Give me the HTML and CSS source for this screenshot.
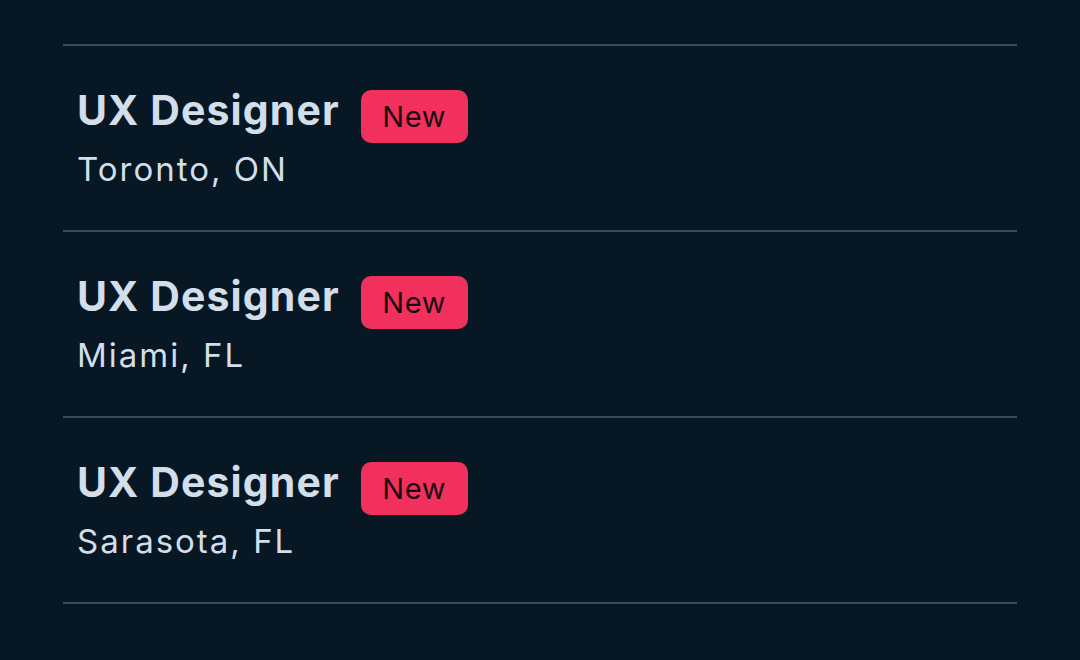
FILE: index.html
```html
<!DOCTYPE html>
<html lang="en">
<head>
<meta charset="utf-8">
<title>Jobs</title>
<link rel="stylesheet" href="styles.css">
</head>
<body>
<main class="page">
  <ul class="jobs">
    <li class="job">
      <div class="job-head">
        <h2 class="job-title">UX Designer</h2>
        <span class="badge">New</span>
      </div>
      <p class="job-loc">Toronto, ON</p>
    </li>
    <li class="job">
      <div class="job-head">
        <h2 class="job-title">UX Designer</h2>
        <span class="badge">New</span>
      </div>
      <p class="job-loc">Miami, FL</p>
    </li>
    <li class="job">
      <div class="job-head">
        <h2 class="job-title">UX Designer</h2>
        <span class="badge">New</span>
      </div>
      <p class="job-loc">Sarasota, FL</p>
    </li>
  </ul>
</main>
</body>
</html>
```
FILE: styles.css
```css
html, body {
  margin: 0;
  padding: 0;
  background: #071723;
}
body {
  font-family: Inter, "Noto Sans", sans-serif;
  color: #d3deeb;
}
.page {
  padding: 44px 63px 0 63px;
}
.jobs {
  list-style: none;
  margin: 0;
  padding: 0;
  border-top: 2px solid #3b4b5a;
}
.job {
  border-bottom: 2px solid #3b4b5a;
  padding: 40px 14px 41px 14px;
}
.job-head {
  display: flex;
  align-items: flex-start;
  gap: 21px;
}
.job-title {
  margin: 0;
  font-size: 41px;
  line-height: 48px;
  font-weight: 700;
  letter-spacing: 1.1px;
  color: #d3deeb;
}
.badge {
  margin-top: 4px;
  height: 53px;
  width: 107px;
  box-sizing: border-box;
  display: flex;
  align-items: center;
  justify-content: center;
  background: #f2305e;
  color: #1a0b12;
  border-radius: 10px;
  font-size: 29px;
  letter-spacing: 0.6px;
  font-weight: 400;
}
.job-loc {
  margin: 6px 0 0 0;
  font-size: 33px;
  line-height: 40px;
  font-weight: 400;
  letter-spacing: 2px;
  color: #d3deeb;
}
```
